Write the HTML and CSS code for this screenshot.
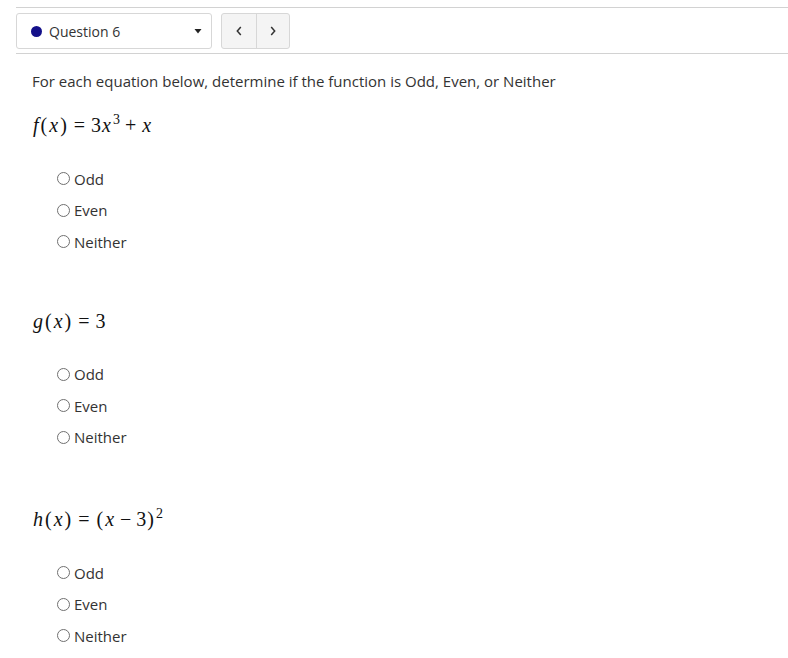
FILE: index.html
```html
<!DOCTYPE html>
<html>
<head>
<meta charset="utf-8">
<link rel="stylesheet" href="styles.css">
</head>
<body>
<div class="rule top"></div>
<div class="toolbar">
  <div class="select">
    <span class="dot"></span>
    <span class="qlabel">Question 6</span>
    <svg class="caret" width="8" height="6" viewBox="0 0 8 6"><path d="M0.5 1 L7.5 1 L4 5.5 Z" fill="#222"/></svg>
  </div>
  <div class="nav">
    <div class="navbtn"><svg width="8" height="12" viewBox="0 0 8 12"><path d="M5.8 2 L2.3 6 L5.8 10" fill="none" stroke="#333" stroke-width="1.5"/></svg></div>
    <div class="navbtn"><svg width="8" height="12" viewBox="0 0 8 12"><path d="M2.2 2 L5.7 6 L2.2 10" fill="none" stroke="#333" stroke-width="1.5"/></svg></div>
  </div>
</div>
<div class="rule bottom"></div>

<div class="content">
  <p class="prompt">For each equation below, determine if the function is Odd, Even, or Neither</p>

  <div class="question">
    <div class="eq"><i>f</i><span class="p">(</span><i>x</i><span class="p">)</span><span class="rel">=</span><span>3</span><i>x</i><sup>3</sup><span class="bin">+</span><i>x</i></div>
    <div class="options">
      <label class="option"><span class="radio"></span>Odd</label>
      <label class="option"><span class="radio"></span>Even</label>
      <label class="option"><span class="radio"></span>Neither</label>
    </div>
  </div>

  <div class="question second">
    <div class="eq"><i>g</i><span class="p">(</span><i>x</i><span class="p">)</span><span class="rel">=</span><span>3</span></div>
    <div class="options">
      <label class="option"><span class="radio"></span>Odd</label>
      <label class="option"><span class="radio"></span>Even</label>
      <label class="option"><span class="radio"></span>Neither</label>
    </div>
  </div>

  <div class="question last">
    <div class="eq"><i>h</i><span class="p">(</span><i>x</i><span class="p">)</span><span class="rel">=</span><span class="p">(</span><i>x</i><span class="bin">−</span><span>3</span><span class="p">)</span><sup>2</sup></div>
    <div class="options">
      <label class="option"><span class="radio"></span>Odd</label>
      <label class="option"><span class="radio"></span>Even</label>
      <label class="option"><span class="radio"></span>Neither</label>
    </div>
  </div>
</div>
</body>
</html>
```

FILE: styles.css
```css
html, body {
  margin: 0;
  padding: 0;
  background: #ffffff;
}
body {
  font-family: "Open Sans", "Liberation Sans", sans-serif;
  color: #333333;
}
.rule {
  margin-left: 16px;
  height: 0;
  border-top: 1px solid #d2d2d2;
}
.rule.top {
  margin-top: 7px;
}
.toolbar {
  display: flex;
  gap: 9px;
  margin: 5px 0 4px 16px;
}
.select {
  height: 34px;
  width: 180px;
  border: 1px solid #d7d7d7;
  border-radius: 3px;
  display: flex;
  align-items: center;
  padding-left: 14px;
}
.dot {
  width: 11px;
  height: 11px;
  border-radius: 50%;
  background: #14108a;
  margin-right: 7px;
}
.qlabel {
  font-size: 14px;
  color: #333;
  flex: 1;
}
.caret {
  margin-right: 9px;
}
.nav {
  display: flex;
  height: 36px;
  border: 1px solid #d7d7d7;
  border-radius: 3px;
  background: #f4f4f4;
  box-sizing: border-box;
}
.navbtn {
  width: 33px;
  display: flex;
  align-items: center;
  justify-content: center;
}
.navbtn:first-child {
  width: 34px;
}
.navbtn + .navbtn {
  border-left: 1px solid #d7d7d7;
  width: 32px;
}
.content {
  padding-left: 32px;
}
.prompt {
  margin: 16px 0 0;
  font-size: 15px;
  line-height: 22px;
  color: #333;
}
.question {
  margin-bottom: 48px;
}
.question.second {
  margin-bottom: 51px;
}
.question.last {
  margin-bottom: 0;
}
.eq {
  font-family: "Liberation Serif", "Times New Roman", serif;
  font-size: 20px;
  line-height: 30px;
  height: 30px;
  color: #111;
  margin-top: 18px;
  margin-bottom: 23px;
  white-space: nowrap;
}
.question + .question .eq {
  margin-top: 0;
}
.eq i {
  font-style: italic;
  padding: 0 1px;
}
.eq .p {
  padding: 0 1px;
}
.eq sup {
  font-size: 0.7em;
  vertical-align: 0;
  position: relative;
  top: -0.6em;
  margin-left: 1px;
}
.eq .rel {
  margin: 0 0.3em;
}
.eq .bin {
  margin: 0 0.25em;
}
.options {
  display: flex;
  flex-direction: column;
  padding-left: 25px;
}
.option {
  display: flex;
  align-items: center;
  height: 31.5px;
  font-size: 15px;
  color: #333;
}
.radio {
  width: 11px;
  height: 11px;
  border: 1px solid #707070;
  border-radius: 50%;
  margin-right: 4px;
}
```
